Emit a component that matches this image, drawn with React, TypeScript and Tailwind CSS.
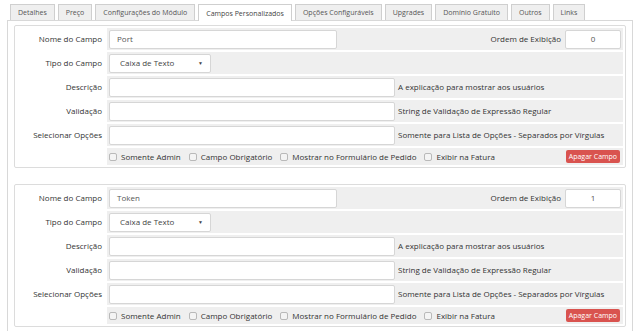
import React from 'react';

const tabs = [
  'Detalhes',
  'Preço',
  'Configurações do Módulo',
  'Campos Personalizados',
  'Opções Configuráveis',
  'Upgrades',
  'Domínio Gratuito',
  'Outros',
  'Links',
];

interface RowProps {
  label?: string;
  className?: string;
  children?: React.ReactNode;
}

const Row: React.FC<RowProps> = ({ label, className = 'h-[22px]', children }) => (
  <div className={`flex gap-[2px] ${className}`}>
    <div className="w-[88px] shrink-0 bg-white flex items-center justify-end pr-[3px] text-[#333]">
      {label}
    </div>
    <div className="flex-1 bg-[#efefef] flex items-center px-[2px]">{children}</div>
  </div>
);

const TextInput: React.FC<{ value?: string; className?: string }> = ({ value = '', className = '' }) => (
  <div
    className={`h-[19px] bg-white border border-[#d6d6d6] rounded-[2px] flex items-center px-[7px] text-[#555] ${className}`}
  >
    {value}
  </div>
);

const Check: React.FC<{ label: string }> = ({ label }) => (
  <div className="flex items-center gap-[4px] mr-[8px]">
    <span className="w-[8px] h-[8px] border border-[#b9b9b9] rounded-[2px] bg-[#f4f4f4]" />
    <span className="text-[#333]">{label}</span>
  </div>
);

const FieldBox: React.FC<{ name: string; order: string; className?: string }> = ({ name, order, className = '' }) => (
  <div className={`border border-[#dcdcdc] rounded-[2px] p-[2px] flex flex-col gap-[2px] ${className}`}>
    <Row label="Nome do Campo">
      <TextInput value={name} className="w-[228px]" />
      <span className="ml-auto mr-[4px] text-[#333]">Ordem de Exibição</span>
      <TextInput value={order} className="w-[56px] justify-center" />
    </Row>
    <Row label="Tipo do Campo">
      <div className="h-[19px] w-[102px] bg-white border border-[#d6d6d6] rounded-[2px] flex items-center justify-between pl-[10px] pr-[7px] text-[#444]">
        <span>Caixa de Texto</span>
        <span className="text-[5px]">▼</span>
      </div>
    </Row>
    <Row label="Descrição">
      <TextInput className="w-[286px]" />
      <span className="ml-[3px] text-[#333]">A explicação para mostrar aos usuários</span>
    </Row>
    <Row label="Validação">
      <TextInput className="w-[286px]" />
      <span className="ml-[3px] text-[#333]">String de Validação de Expressão Regular</span>
    </Row>
    <Row label="Selecionar Opções">
      <TextInput className="w-[286px]" />
      <span className="ml-[3px] text-[#333]">Somente para Lista de Opções - Separados por Vírgulas</span>
    </Row>
    <Row className="h-[17px]">
      <Check label="Somente Admin" />
      <Check label="Campo Obrigatório" />
      <Check label="Mostrar no Formulário de Pedido" />
      <Check label="Exibir na Fatura" />
      <button className="ml-auto mr-[1px] h-[13px] px-[3px] bg-[#d9534f] text-white rounded-[2px] text-[7px] leading-none">
        Apagar Campo
      </button>
    </Row>
  </div>
);

export default function App() {
  return (
    <div className="w-[640px] h-[331px] overflow-hidden bg-white font-['Open_Sans',sans-serif] text-[8px] leading-none">
      <div className="flex items-end gap-[3px] pl-[10px] pt-[4px] text-[7px] whitespace-nowrap">
        {tabs.map((t) => {
          const active = t === 'Campos Personalizados';
          return (
            <div
              key={t}
              className={
                active
                  ? 'shrink-0 h-[17px] px-[7px] flex items-center bg-white border border-b-0 border-[#cfcfcf] text-[#444] -mb-[1px] relative z-10'
                  : 'shrink-0 h-[16px] px-[7px] flex items-center bg-[#efefef] border border-b-0 border-[#cfcfcf] text-[#555]'
              }
            >
              {t}
            </div>
          );
        })}
      </div>
      <div className="ml-[7px] mr-[7px] border border-[#d8d8d8] pt-[4px] px-[6px] h-[400px]">
        <FieldBox name="Port" order="0" />
        <FieldBox name="Token" order="1" className="mt-[16px]" />
      </div>
    </div>
  );
}
